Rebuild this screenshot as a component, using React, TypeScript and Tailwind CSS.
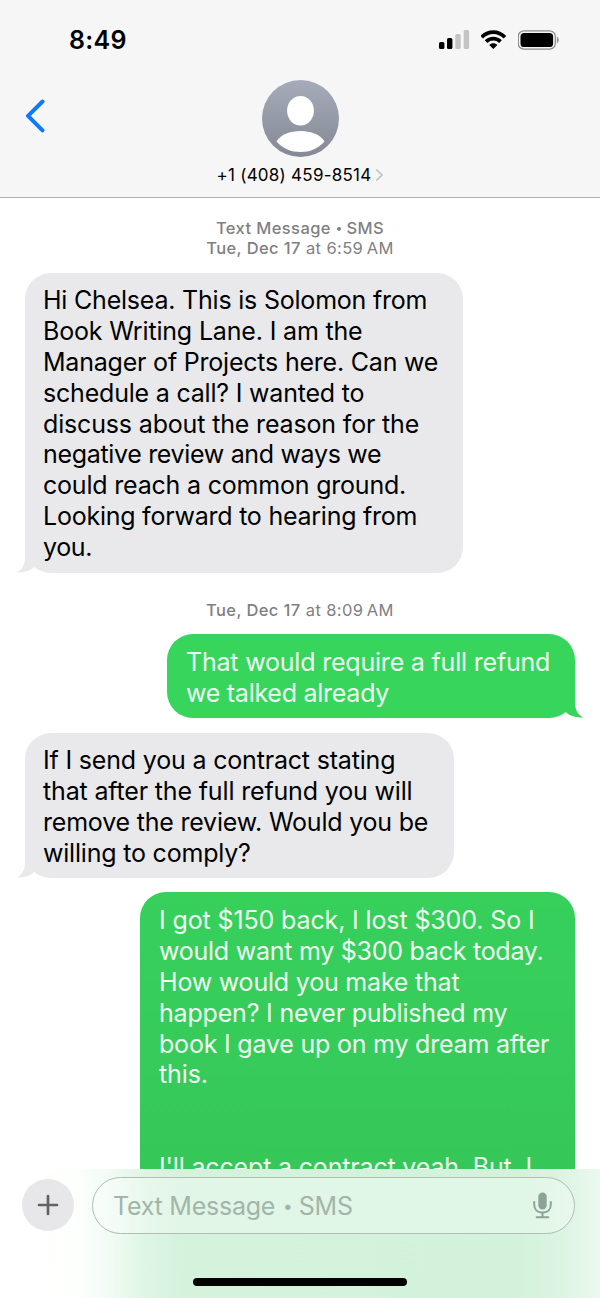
import React from "react";
import clsx from "clsx";

interface Line {
  text: string;
  tracking: string;
}

interface BubbleProps {
  side: "in" | "out";
  lines: Line[];
  className: string;
  tail?: boolean;
}

const firstMessage: Line[] = [
  { text: "Hi Chelsea. This is Solomon from", tracking: "tracking-[-0.21px]" },
  { text: "Book Writing Lane. I am the", tracking: "tracking-[-0.17px]" },
  { text: "Manager of Projects here. Can we", tracking: "tracking-[-0.21px]" },
  { text: "schedule a call? I wanted to", tracking: "tracking-[-0.2px]" },
  { text: "discuss about the reason for the", tracking: "tracking-[-0.16px]" },
  { text: "negative review and ways we", tracking: "tracking-[-0.33px]" },
  { text: "could reach a common ground.", tracking: "tracking-[-0.2px]" },
  { text: "Looking forward to hearing from", tracking: "tracking-[-0.24px]" },
  { text: "you.", tracking: "tracking-[-0.4px]" },
];

const refundReply: Line[] = [
  { text: "That would require a full refund", tracking: "tracking-[-0.2px]" },
  { text: "we talked already", tracking: "tracking-[-0.26px]" },
];

const contractOffer: Line[] = [
  { text: "If I send you a contract stating", tracking: "tracking-[-0.18px]" },
  { text: "that after the full refund you will", tracking: "tracking-[-0.16px]" },
  { text: "remove the review. Would you be", tracking: "tracking-[-0.21px]" },
  { text: "willing to comply?", tracking: "tracking-[-0.2px]" },
];

const longReply: Line[] = [
  { text: "I got $150 back, I lost $300. So I", tracking: "tracking-[-0.13px]" },
  { text: "would want my $300 back today.", tracking: "tracking-[-0.25px]" },
  { text: "How would you make that", tracking: "tracking-[-0.2px]" },
  { text: "happen? I never published my", tracking: "tracking-[-0.19px]" },
  { text: "book I gave up on my dream after", tracking: "tracking-[-0.21px]" },
  { text: "this.", tracking: "tracking-[-0.1px]" },
  { text: "", tracking: "" },
  { text: "", tracking: "" },
  { text: "I'll accept a contract yeah. But, I", tracking: "tracking-[-0.17px]" },
];

const Bubble: React.FC<BubbleProps> = ({ side, lines, className, tail = true }) => {
  const incoming = side === "in";

  return (
    <div
      className={clsx(
        "relative shrink-0 rounded-[26px] text-[25px] leading-[30.8px]",
        incoming
          ? "self-start bg-[#e9e9eb] pb-[10px] pl-[18px] pt-[12.4px] text-black"
          : "self-end pb-[9.5px] pl-[19px] pt-[13px] text-[#eefcf1]",
        className
      )}
    >
      {lines.map((line, i) => (
        <p key={i} className={clsx("h-[30.8px] whitespace-nowrap", line.tracking)}>
          {line.text}
        </p>
      ))}
      {tail && (
        <svg
          viewBox="0 0 24 27"
          className={clsx(
            "absolute bottom-0 h-[27px] w-6",
            incoming ? "-left-2 text-[#e9e9eb]" : "-right-2 -scale-x-100 text-[#38d55d]"
          )}
          fill="currentColor"
        >
          <path d="M8 0V12C8 18.500 5 24 0 26.400C7 27 13.500 25 17.700 20.800L24 10V0Z" />
        </svg>
      )}
    </div>
  );
};

const StatusBar = () => (
  <div className="flex h-[80px] items-start justify-between pl-[69px] pr-[40px] pt-[24px]">
    <span className="text-[25px] font-semibold leading-8 tracking-[0.3px]">8:49</span>
    <div className="flex items-center gap-[11px] pt-[6px]">
      <svg width="31" height="20" viewBox="0 0 31 20">
        <rect x="0" y="12" width="5.4" height="7" rx="1.5" />
        <rect x="8" y="8" width="5.4" height="11" rx="1.5" />
        <rect x="16.3" y="4" width="5.4" height="15" rx="1.5" fill="#c4c4c4" />
        <rect x="24.7" y="0" width="5.4" height="19" rx="1.5" fill="#c4c4c4" />
      </svg>
      <svg width="26" height="20" viewBox="0.7 0 26 20" fill="none" stroke="black" strokeWidth="3.8">
        <path d="M1.4 7.2C8 0.4 18 0.4 24.6 7.2" />
        <path d="M5.8 11.7C9.8 7.7 16.2 7.7 20.2 11.7" />
        <path d="M8.9 15C11.2 12.7 14.8 12.7 17.1 15L13 19Z" fill="black" stroke="none" />
      </svg>
      <svg width="42" height="20" viewBox="0.5 0 42 20">
        <rect x="0.8" y="0.8" width="37" height="18.4" rx="5.6" fill="none" stroke="#8c8c8c" strokeWidth="1.3" />
        <rect x="3" y="3" width="32.6" height="14" rx="3.6" />
        <path d="M39.4 6.8C41.8 7.8 41.8 12.2 39.4 13.2Z" fill="#8c8c8c" />
      </svg>
    </div>
  </div>
);

const Header = () => (
  <header className="h-[198px] shrink-0 border-b border-[#b0b1b1] bg-[#f6f6f6]">
    <StatusBar />
    <div className="grid grid-cols-[1fr_auto_1fr] items-start">
      <button type="button" aria-label="Back" className="pl-[25px] pt-[19px]">
        <svg width="21" height="34" viewBox="0 0 21 34" fill="none" stroke="#0b7aff" strokeWidth="4" strokeLinecap="round" strokeLinejoin="round">
          <path d="M17.5 2.5L3 16.8L17.5 31.3" />
        </svg>
      </button>
      <div className="flex flex-col items-center">
        <svg width="77" height="77" viewBox="0 0 77 77">
          <defs>
            <linearGradient id="avatar" x1="0" y1="0" x2="0" y2="1">
              <stop offset="0" stopColor="#a5abb9" />
              <stop offset="1" stopColor="#858995" />
            </linearGradient>
          </defs>
          <circle cx="38.5" cy="38.5" r="38.5" fill="url(#avatar)" />
          <ellipse cx="38.5" cy="30.7" rx="13.4" ry="14.8" fill="white" />
          <path d="M14.5 61.5C18.5 54.5 28 51 38.5 51S58.5 54.5 62.5 61.5C56 69 47.5 72 38.5 72S21 69 14.5 61.5Z" fill="white" />
        </svg>
        <div className="mt-[7px] flex items-center gap-[4px]">
          <span className="whitespace-nowrap text-[17px] leading-[22px] tracking-[0.25px]">+1 (408) 459-8514</span>
          <svg width="8" height="12" viewBox="0.7 0 8 12" fill="none" stroke="#bcbcbe" strokeWidth="1.6" strokeLinecap="round" strokeLinejoin="round">
            <path d="M1.5 1L6.8 6L1.5 11" />
          </svg>
        </div>
      </div>
    </div>
  </header>
);

const Timestamp = ({ time }: { time: string }) => (
  <p>
    <span className="font-medium">Tue, Dec 17</span> at {time}
    {"\u2009"}AM
  </p>
);

const Composer = () => (
  <footer className="h-[129px] shrink-0 bg-[linear-gradient(90deg,#fff_0px,#fdfffd_75px,#f1fbf4_110px,#def5e4_145px,#d4f2dc_185px,#d3f2db_520px,#dcf4e2_560px,#ebf9ee_600px)]">
    <div className="flex items-center pl-[22px] pr-[25px] pt-2">
      <button type="button" aria-label="Add" className="-mt-px flex size-[52px] items-center justify-center rounded-full bg-[#e7e7ea]">
        <svg width="22" height="22" viewBox="0 0 22 22" stroke="#626266" strokeWidth="2.7" strokeLinecap="round">
          <path d="M11 2V20M2 11H20" />
        </svg>
      </button>
      <div className="ml-[18px] flex h-[57px] flex-1 items-center justify-between rounded-full border border-[#b0beb4] bg-white/30 pl-[20px] pr-[22px]">
        <span className="whitespace-nowrap text-[25px] leading-[30px] tracking-[-0.24px] text-[#a3b5a9]">
          Text Message <span className="mx-[1px] inline-block w-[8px] text-center align-[3px] text-[17px] leading-none">•</span> SMS
        </span>
        <svg width="19" height="27" viewBox="0 0 19 27" fill="none" stroke="#8ba497" strokeWidth="2" strokeLinecap="round">
          <rect x="5.3" y="0.5" width="8.4" height="17" rx="4.2" fill="#8ba497" stroke="none" />
          <path d="M1.2 10V12.5C1.2 17.5 4.7 20.6 9.5 20.6S17.8 17.5 17.8 12.5V10" />
          <path d="M9.5 21V25M3.7 25.3H15.3" />
        </svg>
      </div>
    </div>
    <div className="mx-auto mt-[44px] h-2 w-[214px] rounded-full bg-black" />
  </footer>
);

export default function App() {
  return (
    <div className="flex h-[1298px] w-[600px] flex-col overflow-hidden bg-white font-[Inter,sans-serif] text-black">
      <Header />
      <main className="flex min-h-0 flex-1 flex-col overflow-hidden px-[25px]">
        <div className="mt-[20px] shrink-0 text-center text-[16.5px] leading-5 tracking-[0.4px] text-[#7f7f83]">
          <p className="font-medium">
            Text Message <span className="inline-block w-[6px] text-center align-[2px] text-[12px] leading-none">•</span> SMS
          </p>
          <Timestamp time="6:59" />
        </div>
        <Bubble side="in" lines={firstMessage} className="mt-[15px] w-[438px]" />
        <div className="mt-[27.6px] shrink-0 text-center text-[16.5px] leading-5 tracking-[0.4px] text-[#7f7f83]">
          <Timestamp time="8:09" />
        </div>
        <Bubble side="out" lines={refundReply} className="mt-[14px] w-[408px] bg-[#38d55d]" />
        <Bubble side="in" lines={contractOffer} className="mt-[14.6px] w-[429px]" />
        <Bubble
          side="out"
          lines={longReply}
          tail={false}
          className="mt-[14px] w-[435px] bg-linear-to-b from-[#37d05b] to-[#35c759]"
        />
      </main>
      <Composer />
    </div>
  );
}
